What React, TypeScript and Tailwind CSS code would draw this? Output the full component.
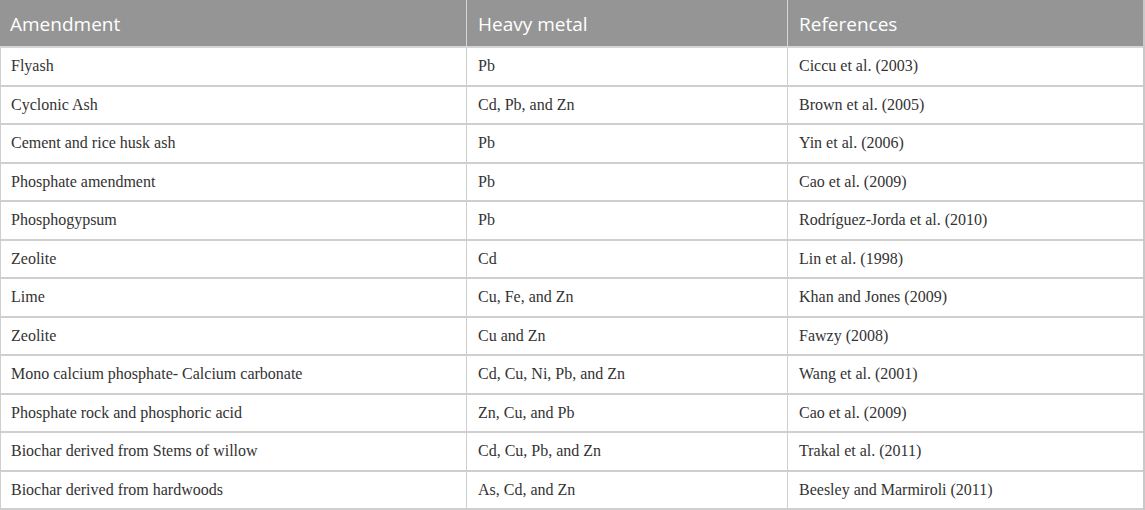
import React from 'react'

const rows: [string, string, string][] = [
  ['Flyash', 'Pb', 'Ciccu et al. (2003)'],
  ['Cyclonic Ash', 'Cd, Pb, and Zn', 'Brown et al. (2005)'],
  ['Cement and rice husk ash', 'Pb', 'Yin et al. (2006)'],
  ['Phosphate amendment', 'Pb', 'Cao et al. (2009)'],
  ['Phosphogypsum', 'Pb', 'Rodríguez-Jorda et al. (2010)'],
  ['Zeolite', 'Cd', 'Lin et al. (1998)'],
  ['Lime', 'Cu, Fe, and Zn', 'Khan and Jones (2009)'],
  ['Zeolite', 'Cu and Zn', 'Fawzy (2008)'],
  ['Mono calcium phosphate- Calcium carbonate', 'Cd, Cu, Ni, Pb, and Zn', 'Wang et al. (2001)'],
  ['Phosphate rock and phosphoric acid', 'Zn, Cu, and Pb', 'Cao et al. (2009)'],
  ['Biochar derived from Stems of willow', 'Cd, Cu, Pb, and Zn', 'Trakal et al. (2011)'],
  ['Biochar derived from hardwoods', 'As, Cd, and Zn', 'Beesley and Marmiroli (2011)'],
]

const App = () => {
  return (
    <div className="w-[1145px] h-[510px] bg-white overflow-hidden">
      <div className="grid grid-cols-[466px_321px_1fr] grid-rows-[48px_repeat(12,1fr)] h-[510px] border-r-2 border-[#c9c9c9]">
        {['Amendment', 'Heavy metal', 'References'].map((h, i) => (
          <div
            key={h}
            className={`flex items-center pt-[3px] bg-[#959595] text-white text-[19px] font-['Open_Sans',sans-serif] border-b-2 border-[#d6d6d6] ${i === 0 ? 'pl-[10px]' : 'pl-[11px] border-l border-[#a8a8a8]'}`}
          >
            {h}
          </div>
        ))}
        {rows.map((r, ri) =>
          r.map((c, ci) => (
            <div
              key={`${ri}-${ci}`}
              className={`flex items-center text-[#333333] text-[16px] font-['Liberation_Serif',serif] border-b-2 border-l border-[#cfcfcf] ${ci === 0 ? 'pl-[10px]' : 'pl-[11px]'}`}
            >
              {c}
            </div>
          ))
        )}
      </div>
    </div>
  )
}

export default App
